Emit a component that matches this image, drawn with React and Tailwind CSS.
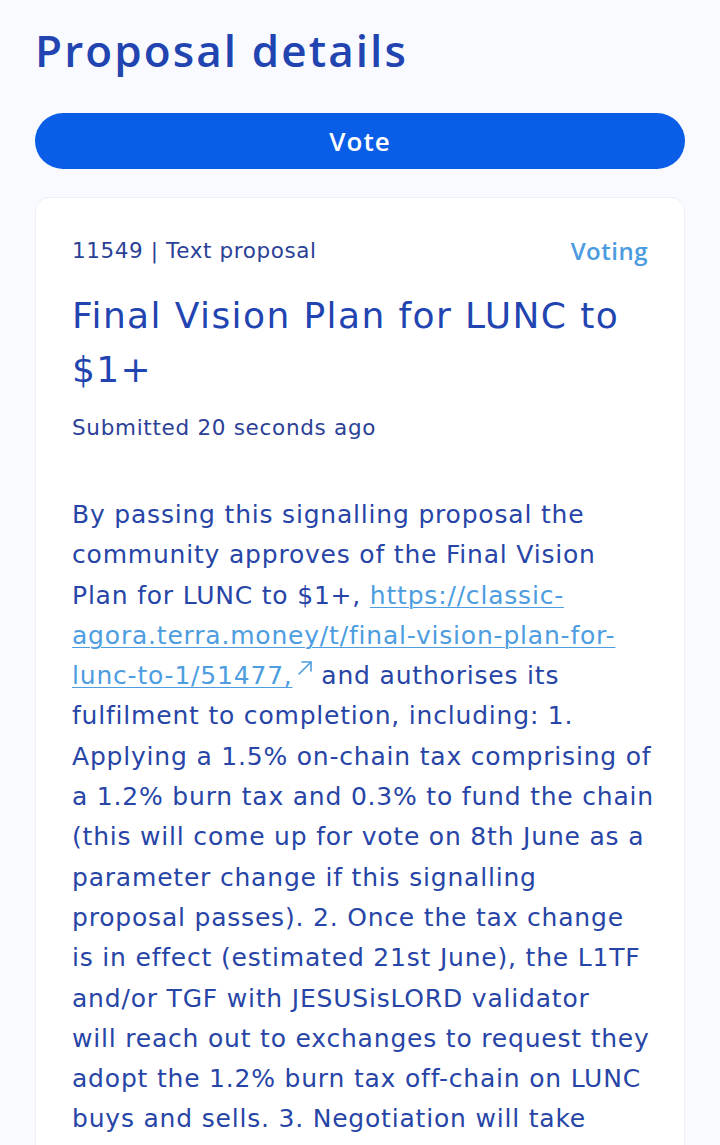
export default function App() {
  const font = { fontFamily: '"Open Sans", "Noto Sans", sans-serif' };
  const dv = { fontFamily: '"DejaVu Sans", "Noto Sans", sans-serif' };
  const lines = [
    ["By passing this signalling proposal the"],
    ["community approves of the Final Vision"],
    ["Plan for LUNC to $1+, ", { link: "https://classic-" }],
    [{ link: "agora.terra.money/t/final-vision-plan-for-" }],
    [{ link: "lunc-to-1/51477," }, { arrow: true }, " and authorises its"],
    ["fulfilment to completion, including: 1."],
    ["Applying a 1.5% on-chain tax comprising of"],
    ["a 1.2% burn tax and 0.3% to fund the chain"],
    ["(this will come up for vote on 8th June as a"],
    ["parameter change if this signalling"],
    ["proposal passes). 2. Once the tax change"],
    ["is in effect (estimated 21st June), the L1TF"],
    ["and/or TGF with JESUSisLORD validator"],
    ["will reach out to exchanges to request they"],
    ["adopt the 1.2% burn tax off-chain on LUNC"],
    ["buys and sells. 3. Negotiation will take"],
  ];
  return (
    <div className="h-[1145px] overflow-hidden bg-[#f8faff] px-[35px] pt-[22px]" style={font}>
      <h1 className="text-[44px] leading-[56px] font-semibold text-[#2144b0] tracking-[2.1px]">
        Proposal details
      </h1>
      <button className="mt-[35px] h-[56px] w-full rounded-full bg-[#0a5de6] text-[26px] font-semibold tracking-[1px] text-white">
        Vote
      </button>
      <div className="mt-[28px] rounded-[14px] border border-[#eceff5] bg-white px-[36px] pt-[36px] pb-[40px]" style={dv}>
        <div className="flex items-center justify-between text-[21.5px] leading-[34px] tracking-[0.6px] text-[#2b4196]">
          <span>11549 | Text proposal</span>
          <span className="text-[24px] font-semibold tracking-[0.5px] text-[#4a9be0]" style={font}>Voting</span>
        </div>
        <div className="mt-[21px] text-[36px] leading-[54px] tracking-[1.4px] text-[#2144b0]">
          Final Vision Plan for LUNC to
          <br />$1+
        </div>
        <div className="mt-[14px] text-[21.5px] leading-[34px] tracking-[0.7px] text-[#2b4196]">
          Submitted 20 seconds ago
        </div>
        <div className="mt-[50px] text-[25px] leading-[40.3px] tracking-[0.8px] text-[#2745a6]">
          {lines.map((ln, i) => (
            <div key={i} className="whitespace-nowrap">
              {ln.map((p, j) =>
                typeof p === "string" ? (
                  <span key={j}>{p}</span>
                ) : p.link ? (
                  <span key={j} className="text-[#4d9de0] underline decoration-1 underline-offset-[3px]">
                    {p.link}
                  </span>
                ) : (
                  <svg key={j} className="ml-[4px] inline-block align-[8px]" width="16" height="16" viewBox="0 0 16 16" fill="none" stroke="#4d9de0" strokeWidth="1.6" strokeLinecap="round" strokeLinejoin="round">
                    <path d="M2 14 L14 2" />
                    <path d="M5 2 H14 V11" />
                  </svg>
                )
              )}
            </div>
          ))}
        </div>
      </div>
    </div>
  );
}
